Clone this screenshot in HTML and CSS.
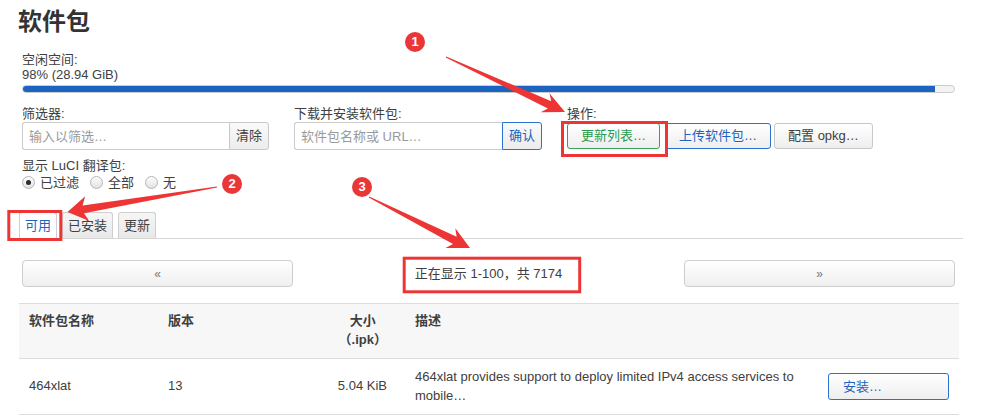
FILE: index.html
```html
<!DOCTYPE html>
<html lang="zh-CN">
<head>
<meta charset="utf-8">
<title>软件包</title>
<link rel="stylesheet" href="styles.css">
</head>
<body>
<div class="page">
  <h2 class="title">软件包</h2>

  <div class="free">
    <div class="lbl">空闲空间:</div>
    <div class="val">98% (28.94 GiB)</div>
    <div class="bar"><div class="fill" style="width:98%"></div></div>
  </div>

  <div class="controls">
    <div class="field">
      <div class="lbl">筛选器:</div>
      <div class="igroup">
        <input class="inp" type="text" placeholder="输入以筛选…">
        <button class="btn addon">清除</button>
      </div>
    </div>
    <div class="field">
      <div class="lbl">下载并安装软件包:</div>
      <div class="igroup">
        <input class="inp" type="text" placeholder="软件包名称或 URL…">
        <button class="btn addon blue">确认</button>
      </div>
    </div>
    <div class="field">
      <div class="lbl">操作:</div>
      <div class="actions">
        <button class="btn green">更新列表…</button>
        <button class="btn blue upload">上传软件包…</button>
        <button class="btn config">配置 opkg…</button>
      </div>
    </div>
  </div>

  <div class="i18n">
    <div class="lbl">显示 LuCI 翻译包:</div>
    <div class="radios">
      <label class="radio"><input type="radio" name="i18n" checked><span>已过滤</span></label>
      <label class="radio"><input type="radio" name="i18n"><span>全部</span></label>
      <label class="radio"><input type="radio" name="i18n"><span>无</span></label>
    </div>
  </div>

  <ul class="tabs">
    <li class="tab active">可用</li>
    <li class="tab">已安装</li>
    <li class="tab">更新</li>
  </ul>

  <div class="pager">
    <button class="pbtn">«</button>
    <div class="pinfo">正在显示 1-100，共 7174</div>
    <button class="pbtn">»</button>
  </div>

  <table class="pkgs">
    <colgroup>
      <col class="c-name"><col class="c-ver"><col class="c-size"><col class="c-desc"><col class="c-act">
    </colgroup>
    <thead>
      <tr>
        <th>软件包名称</th>
        <th>版本</th>
        <th class="size"><span class="stack">大小<br>（.ipk）</span></th>
        <th class="desc">描述</th>
        <th></th>
      </tr>
    </thead>
    <tbody>
      <tr>
        <td>464xlat</td>
        <td>13</td>
        <td class="size">5.04 KiB</td>
        <td class="desc">464xlat provides support to deploy limited IPv4 access services to mobile…</td>
        <td class="act"><button class="btn blue install">安装…</button></td>
      </tr>
    </tbody>
  </table>
</div>

<svg class="marks" viewBox="0 0 995 419" width="995" height="419" aria-hidden="true">
  <rect x="562.5" y="122.5" width="104" height="33" fill="none" stroke="#ee3535" stroke-width="3"/>
  <rect x="8.8" y="211.5" width="52" height="28" fill="none" stroke="#ee3535" stroke-width="3"/>
  <rect x="404.2" y="258.2" width="175.5" height="33.6" fill="none" stroke="#ee3535" stroke-width="3"/>
  <polygon fill="#ee3535" points="445.79,57.45 547.89,108.5 540.63,112.3 565,112 549.43,93.24 551.25,101.24 446.21,56.55"/>
  <polygon fill="#ee3535" points="216.92,186.51 82.62,205.41 85.17,196.37 67.5,212 89.29,221.03 83.94,213.31 217.08,187.49"/>
  <polygon fill="#ee3535" points="368.77,197.45 453.02,243.91 445.4,247.9 470,248 455.32,228.26 456.62,236.77 369.23,196.55"/>
</svg>
<div class="badge b1">1</div>
<div class="badge b2">2</div>
<div class="badge b3">3</div>
</body>
</html>
```

FILE: styles.css
```css
html, body {
  margin: 0;
  padding: 0;
  background: #fff;
}
body {
  position: relative;
  width: 995px;
  height: 419px;
  overflow: hidden;
  font-family: "Liberation Sans", "Noto Sans CJK SC", sans-serif;
  font-size: 13px;
  color: #404040;
}
.page {
  padding: 8px 32px 0 18px;
}
.title {
  margin: 0;
  font-size: 24px;
  line-height: 28px;
  font-weight: bold;
  color: #333;
}
.lbl {
  line-height: 15px;
}
.free {
  margin-top: 16px;
  padding: 0 8px 0 4px;
}
.val {
  line-height: 15px;
}
.bar {
  margin-top: 3px;
  height: 6px;
  border: 1px solid #ccc;
  border-radius: 4px;
  background: #f3f3f3;
  overflow: hidden;
}
.fill {
  height: 100%;
  background: #1b64c2;
}
.controls {
  margin-top: 13px;
  padding-left: 4px;
  display: grid;
  grid-template-columns: 247px 248px auto;
  column-gap: 25px;
}
.field .lbl {
  margin-bottom: 1px;
}
.igroup {
  display: flex;
  height: 28px;
}
.inp {
  flex: 1;
  min-width: 0;
  box-sizing: border-box;
  height: 28px;
  margin: 0;
  padding: 0 6px;
  border: 1px solid #ccc;
  border-right: none;
  border-radius: 3px 0 0 3px;
  font-family: inherit;
  font-size: 13px;
  color: #404040;
  background: #fff;
}
.inp::placeholder {
  color: #9a9a9a;
}
.btn {
  box-sizing: border-box;
  height: 26px;
  margin: 0;
  padding: 0 13px;
  border: 1px solid #c8c8c8;
  border-radius: 3px;
  background: linear-gradient(#ffffff, #eeeeee);
  font-family: inherit;
  font-size: 13px;
  color: #404040;
  line-height: 24px;
  white-space: nowrap;
}
.btn.addon {
  height: 28px;
  padding: 0 6px;
  border-radius: 0 3px 3px 0;
  background: linear-gradient(#fafafa, #ececec);
}
.btn.blue {
  border-color: #2a72d0;
  color: #1c64c0;
}
.btn.green {
  border-color: #36a25a;
  color: #2a9a4c;
}
.actions {
  display: flex;
  align-items: center;
  height: 28px;
  margin-top: 1px;
}
.actions .upload {
  margin-left: 5px;
}
.actions .config {
  margin-left: 3px;
}
.i18n {
  margin-top: 8px;
  padding-left: 4px;
}
.radios {
  display: flex;
  align-items: center;
  height: 17px;
  margin-top: 1px;
}
.radio {
  display: flex;
  align-items: center;
  margin-right: 11px;
}
.radio input {
  appearance: none;
  -webkit-appearance: none;
  box-sizing: border-box;
  width: 13px;
  height: 13px;
  margin: 0 5px 0 0;
  border: 1px solid #b4b4b4;
  border-radius: 50%;
  background: linear-gradient(#fdfdfd, #e2e2e2);
  position: relative;
}
.radio input:checked::after {
  content: "";
  position: absolute;
  left: 3px;
  top: 3px;
  width: 5px;
  height: 5px;
  border-radius: 50%;
  background: #2b2b2b;
}
.radio span {
  line-height: 17px;
}
.tabs {
  list-style: none;
  margin: 21px 0 0 0;
  padding: 0 0 0 1px;
  display: flex;
  border-bottom: 1px solid #d6d6d6;
  height: 26px;
}
.tab {
  box-sizing: border-box;
  height: 26px;
  padding: 0 5px;
  margin-right: 5px;
  line-height: 25px;
  border: 1px solid #cfcfcf;
  border-bottom: none;
  border-radius: 3px 3px 0 0;
  background: linear-gradient(#f6f6f6, #e8e8e8);
  color: #404040;
}
.tab.active {
  background: #fff;
  color: #1c64c0;
  height: 27px;
}
.pager {
  margin-top: 21px;
  padding: 0 8px 0 4px;
  display: grid;
  grid-template-columns: 271px 1fr 271px;
  align-items: center;
}
.pbtn {
  box-sizing: border-box;
  height: 27px;
  margin: 0;
  border: 1px solid #cdcdcd;
  border-radius: 4px;
  background: linear-gradient(#ffffff, #efefef);
  color: #777;
  font-family: inherit;
  font-size: 12px;
}
.pinfo {
  text-align: center;
  line-height: 18px;
}
.pkgs {
  margin: 16px 0 0 1px;
  width: 940px;
  border-collapse: collapse;
  table-layout: fixed;
}
.c-name { width: 139px; }
.c-ver { width: 132px; }
.c-size { width: 115px; }
.c-desc { width: 413px; }
.c-act { width: 141px; }
.pkgs thead tr {
  background: #f7f7f7;
  border-top: 1px solid #dddddd;
  border-bottom: 1px solid #dddddd;
}
.pkgs th {
  padding: 7px 10px 9px;
  line-height: 19px;
  text-align: left;
  vertical-align: top;
  font-weight: bold;
  color: #404040;
}
.pkgs th.size {
  text-align: right;
  padding-right: 18px;
}
.stack {
  display: inline-block;
  text-align: center;
}
.pkgs tbody tr {
  border-bottom: 1px solid #dddddd;
}
.pkgs td {
  padding: 9px 10px;
  line-height: 18.5px;
  vertical-align: middle;
}
.pkgs td.size {
  text-align: right;
  padding-right: 18px;
}
.btn.install {
  width: 121px;
  height: 27px;
  text-align: left;
  padding-left: 14px;
}
.marks {
  position: absolute;
  left: 0;
  top: 0;
  pointer-events: none;
}
.badge {
  position: absolute;
  width: 20px;
  height: 20px;
  border-radius: 50%;
  background: #e93636;
  color: #fff;
  font-size: 13px;
  font-weight: bold;
  line-height: 20px;
  text-align: center;
}
.b1 { left: 405px; top: 32px; }
.b2 { left: 222px; top: 174px; }
.b3 { left: 352px; top: 177px; }
```
